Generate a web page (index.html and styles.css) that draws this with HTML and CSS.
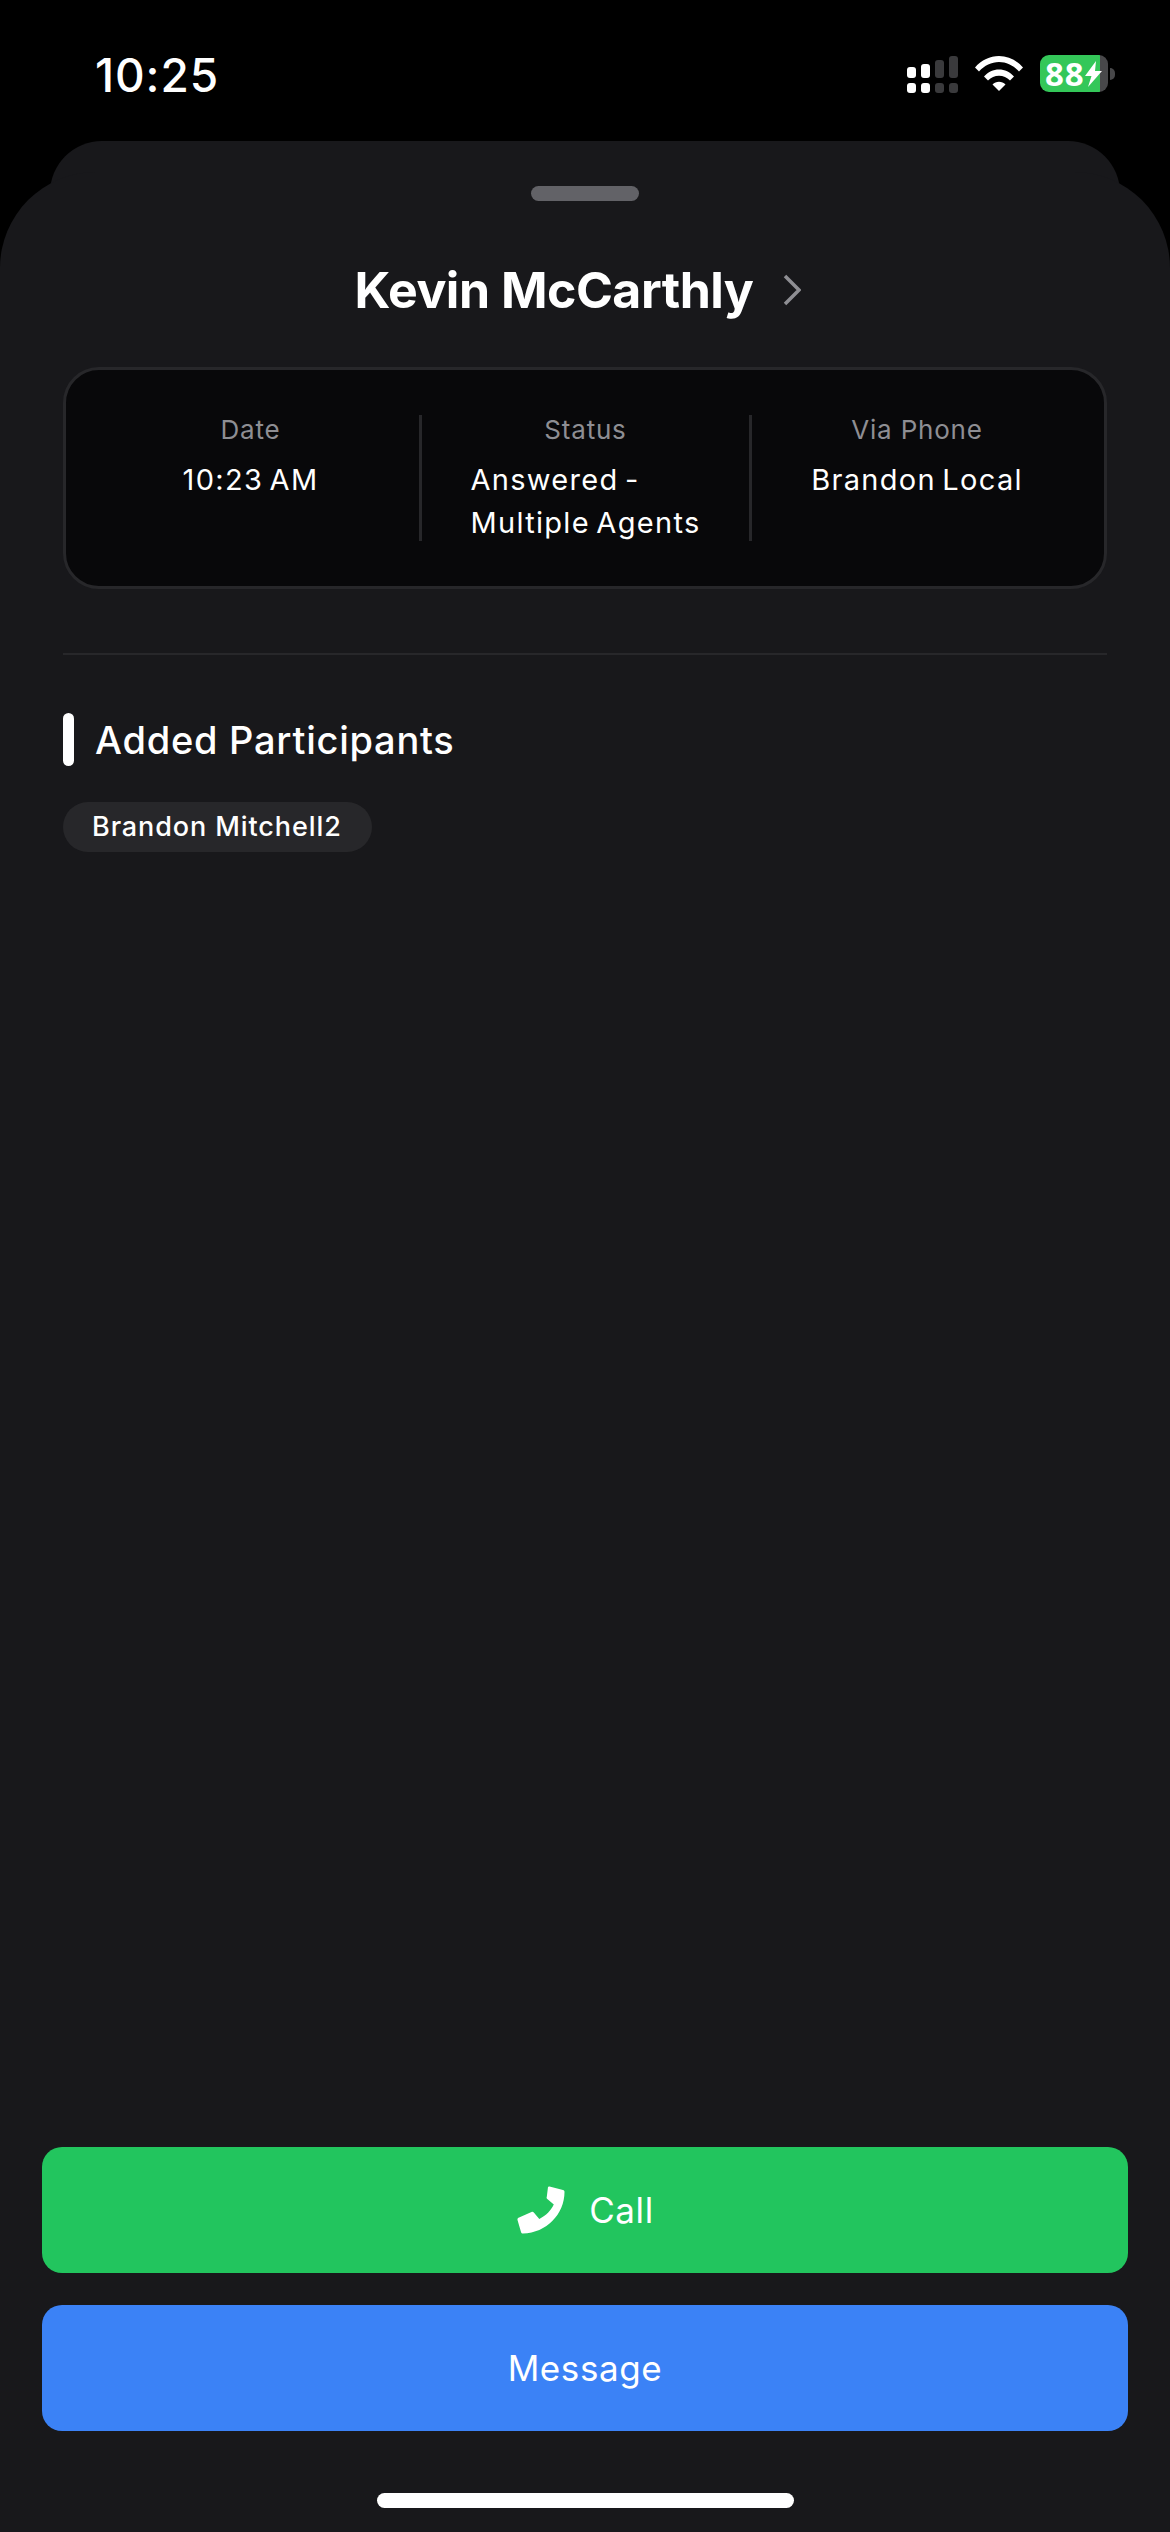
FILE: index.html
```html
<!DOCTYPE html>
<html lang="en">
<head>
<meta charset="utf-8">
<title>Kevin McCarthly</title>
<link rel="stylesheet" href="styles.css">
</head>
<body>
<div class="screen">
  <header class="status">
    <span class="clock">10:25</span>
    <div class="status-icons">
      <svg class="signal" width="51" height="37" viewBox="0 0 51 37">
        <rect x="0" y="11" width="9" height="11" rx="3" fill="#fff"/>
        <rect x="14" y="8" width="9" height="14" rx="3" fill="#fff"/>
        <rect x="28" y="4" width="9" height="18" rx="3" fill="#3a3a3c"/>
        <rect x="42" y="0" width="9" height="22" rx="3" fill="#3a3a3c"/>
        <rect x="0" y="27" width="9" height="10" rx="3" fill="#fff"/>
        <rect x="14" y="27" width="9" height="10" rx="3" fill="#fff"/>
        <rect x="28" y="27" width="9" height="10" rx="3" fill="#3a3a3c"/>
        <rect x="42" y="27" width="9" height="10" rx="3" fill="#3a3a3c"/>
      </svg>
      <svg class="wifi" width="48" height="36" viewBox="0 0 48 36">
        <path d="M0 12.500C6.500 5 15 1 24 1s17.500 4 24 11.500l-4 4C38.500 10.500 31.500 7 24 7S9.500 10.500 4 16.500z" fill="#fff"/>
        <path d="M9 21.500C13 17 18.300 14.500 24 14.500s11 2.500 15 7l-4 4.100C32 22.500 28.200 20.700 24 20.700s-8 1.800-11 4.900z" fill="#fff"/>
        <path d="M17.500 29.500c1.800-1.800 4-2.700 6.500-2.700s4.700.9 6.500 2.700L24 36z" fill="#fff"/>
      </svg>
      <div class="battery">
        <div class="battery-body">
          <span class="battery-level">88</span>
          <svg class="bolt" width="17" height="26" viewBox="0 0 17 26"><path d="M11 0 0 15h6.500L3 26 17 10h-7z" fill="#fff"/></svg>
        </div>
        <span class="battery-cap"></span>
      </div>
    </div>
  </header>

  <div class="peek"></div>

  <main class="sheet">
    <div class="grabber"></div>
    <h1 class="contact">
      <span>Kevin McCarthly</span>
      <svg class="chevron" width="18" height="32" viewBox="0 0 18 32"><path d="M2 2l14 14L2 30" fill="none" stroke="#8e8e93" stroke-width="3.500"/></svg>
    </h1>

    <section class="details">
      <div class="cell">
        <span class="label">Date</span>
        <span class="value">10:23 AM</span>
      </div>
      <div class="cell">
        <span class="label">Status</span>
        <span class="value">Answered -<br>Multiple Agents</span>
      </div>
      <div class="cell">
        <span class="label">Via Phone</span>
        <span class="value">Brandon Local</span>
      </div>
    </section>

    <hr class="rule">

    <h2 class="section-title">Added Participants</h2>
    <div class="chips"><span class="chip">Brandon Mitchell2</span></div>

    <div class="actions">
      <button class="btn btn-call">
        <svg width="50" height="50" viewBox="0 0 50 50"><path d="M33.500 1.500 47 5c1 .3 1.500 1 1.500 2 0 22-18 41-41.500 41.500-1 0-1.700-.5-2-1.500L1.500 35c-.2-1 .2-1.800 1-2.200L15.500 27c.9-.4 1.700-.2 2.300.5l5.500 6.500c7-3.500 11.500-8.500 14.500-14.500l-6.500-5.500c-.7-.6-.9-1.400-.5-2.300L32 2c.3-.4.800-.7 1.500-.5z" fill="#fff"/></svg>
        <span>Call</span>
      </button>
      <button class="btn btn-message">Message</button>
    </div>

    <div class="home-bar"></div>
  </main>
</div>
</body>
</html>
```

FILE: styles.css
```css
* { box-sizing: border-box; }
html, body { margin: 0; padding: 0; background: #000; }
body { font-family: Inter, "Noto Sans", sans-serif; color: #fff; }

.screen { width: 1170px; height: 2532px; display: flex; flex-direction: column; overflow: hidden; background: #000; }

.status { height: 141px; flex: none; display: flex; justify-content: space-between; align-items: flex-start; padding: 48px 0 0 95px; }
.clock { font-size: 46px; font-weight: 500; line-height: 54px; letter-spacing: 0.9px; }
.status-icons { display: flex; align-items: flex-start; margin-right: 55px; margin-top: 7px; }
.signal { margin-right: 17px; margin-top: 1px; }
.wifi { margin-right: 17px; }
.battery { display: flex; align-items: center; }
.battery-body { width: 68px; height: 37px; border-radius: 9px; background: linear-gradient(to right, #34c759 0, #34c759 60px, #48484a 60px); display: flex; align-items: center; padding-left: 5px; }
.battery-level { font-family: "Open Sans", sans-serif; font-size: 33px; font-weight: 700; line-height: 37px; letter-spacing: 1px; }
.bolt { flex: none; }
.battery-cap { width: 5px; height: 12px; border-radius: 0 6px 6px 0; background: #48484a; margin-left: 2px; }

.peek { height: 60px; flex: none; margin: 0 50px -29px; background: #18181b; border-radius: 52px 52px 0 0; }

.sheet { flex: 1; min-height: 0; display: flex; flex-direction: column; background: #18181b; border-radius: 96px 96px 0 0; padding: 14px 63px 0; position: relative; }

.grabber { width: 108px; height: 15px; border-radius: 8px; background: #626267; align-self: center; flex: none; }

.contact { margin: 59px 0 0; display: flex; justify-content: center; align-items: center; gap: 30px; font-size: 50px; font-weight: 700; line-height: 60px; letter-spacing: -0.5px; padding-right: 14px; flex: none; }
.chevron { flex: none; }

.details { margin-top: 47px; height: 222px; border: 3px solid #27272a; border-radius: 36px; background: #08080a; display: grid; grid-template-columns: 337px 330px 1fr; padding: 45px 22px 0 16px; flex: none; }
.cell { height: 126px; display: flex; flex-direction: column; align-items: center; border-left: 3px solid #27272a; }
.cell:first-child { border-left: 0; }
.label { font-size: 26px; line-height: 32px; color: #8e8e93; letter-spacing: 0.8px; margin-top: -1px; }
.value { font-size: 29px; line-height: 43px; margin-top: 12px; letter-spacing: 1.3px; word-spacing: -3px; }

.rule { height: 2px; border: 0; background: #27272a; margin: 64px 0 0; flex: none; }

.section-title { margin: 58px 0 0; display: flex; align-items: flex-start; gap: 21px; height: 53px; font-size: 38px; font-weight: 500; line-height: 55px; letter-spacing: 0.75px; flex: none; }
.section-title::before { content: ""; width: 11px; height: 53px; border-radius: 6px; background: #fff; flex: none; }

.chips { display: flex; margin-top: 36px; flex: none; }
.chip { height: 50px; padding: 0 30px 0 29px; border-radius: 25px; background: #27272a; font-size: 27px; font-weight: 500; line-height: 50px; letter-spacing: 0.9px; }

.actions { margin: auto -21px 0; display: flex; flex-direction: column; gap: 32px; flex: none; }
.btn { height: 126px; border: 0; border-radius: 20px; color: #fff; font-family: inherit; font-size: 35px; font-weight: 400; letter-spacing: 0.6px; display: flex; align-items: center; justify-content: center; gap: 23px; padding: 0; }
.btn-call { background: #22c55e; }
.btn-message { background: #3b82f6; }

.home-bar { width: 417px; height: 15px; border-radius: 8px; background: #fff; align-self: center; margin: 62px 0 24px; flex: none; }
```
